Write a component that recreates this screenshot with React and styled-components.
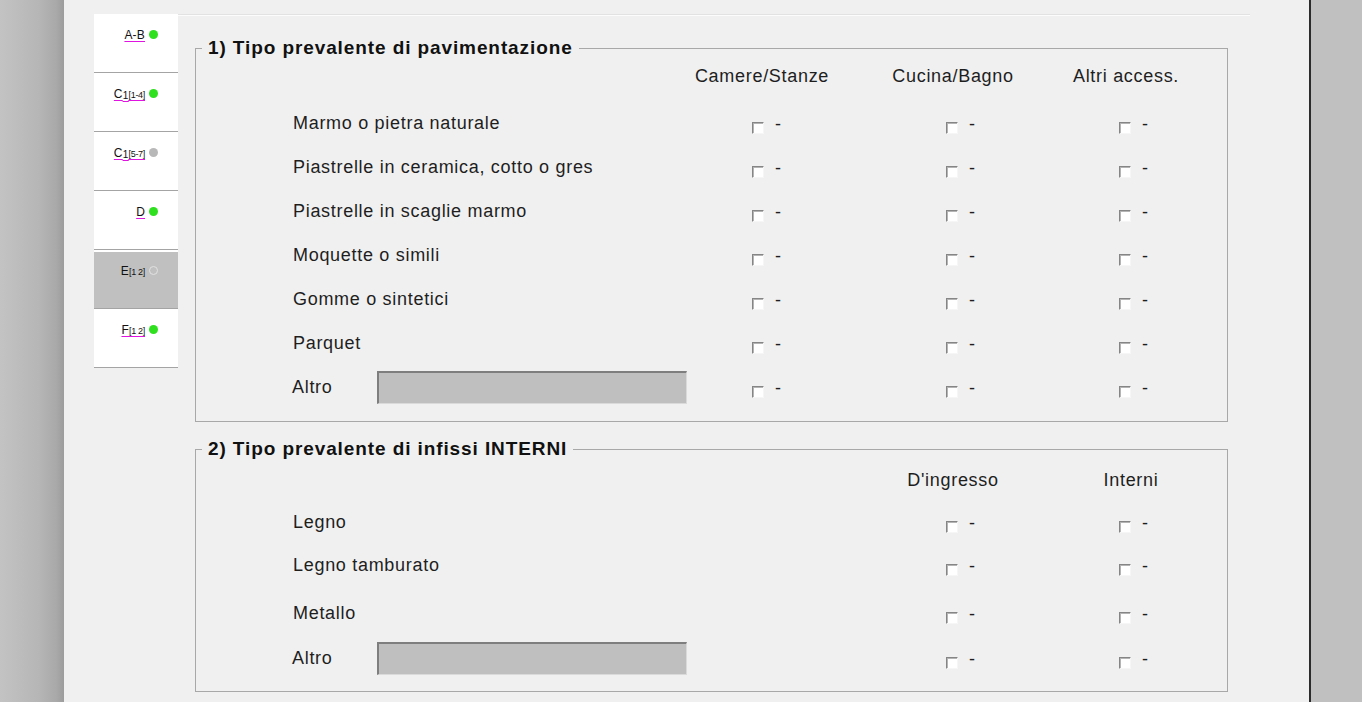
import React from "react";
import styled, { createGlobalStyle } from "styled-components";

const GlobalStyle = createGlobalStyle`
  html, body {
    margin: 0;
    padding: 0;
  }
  body {
    font-family: "Liberation Sans", Arial, sans-serif;
    overflow: hidden;
  }
`;

const Page = styled.div`
  display: flex;
  width: 1362px;
  height: 702px;
  overflow: hidden;
`;

const LeftShade = styled.div`
  width: 64px;
  flex-shrink: 0;
  background: linear-gradient(
    to right,
    #c3c3c3 0%,
    #b6b6b6 60%,
    #a9a9a9 88%,
    #9c9c9c 100%
  );
`;

const Panel = styled.div`
  width: 1247px;
  flex-shrink: 0;
  box-sizing: border-box;
  display: flex;
  align-items: flex-start;
  padding-left: 30px;
  background: #f0f0f0;
  border-right: 2px solid #2b2b2b;
`;

const RightShade = styled.div`
  flex: 1;
  background: #c0c0c0;
`;

const TabColumn = styled.div`
  width: 84px;
  flex-shrink: 0;
  margin-top: 14px;
  display: flex;
  flex-direction: column;
`;

const Tab = styled.div`
  height: 59px;
  box-sizing: border-box;
  display: flex;
  justify-content: flex-end;
  align-items: flex-start;
  padding: 14px 20px 0 0;
  background: ${(p) => (p.$active ? "#c0c0c0" : "#ffffff")};
  box-shadow: ${(p) => (p.$active ? "inset 0 2px 0 #ffffff" : "none")};
  border-bottom: 1px solid #a4a4a4;
`;

const TabLabel = styled.span`
  display: inline-flex;
  align-items: baseline;
  font-size: 12px;
  line-height: 14px;
  height: 14px;
  color: #111;
  letter-spacing: 0.2px;
  text-decoration: ${(p) => (p.$link ? "underline" : "none")};
  text-decoration-color: #e014e0;
  text-underline-offset: 2px;
`;

const Index = styled.span`
  font-size: 10px;
  position: relative;
  top: 1px;
  text-decoration: inherit;
`;

const Range = styled.span`
  font-size: 9px;
  letter-spacing: -0.3px;
  text-decoration: inherit;
`;

const Dot = styled.span`
  width: 9px;
  height: 9px;
  box-sizing: border-box;
  border-radius: 50%;
  margin: 2px 0 0 4px;
  flex-shrink: 0;
  background: ${(p) =>
    p.$state === "on" ? "#2fe01f" : p.$state === "off" ? "#b8b8b8" : "transparent"};
  border: ${(p) => (p.$state === "empty" ? "1.5px solid #e2e2e2" : "none")};
`;

const Content = styled.div`
  width: 1072px;
  display: flex;
  flex-direction: column;
`;

const TopRule = styled.div`
  margin-top: 14px;
  height: 0;
  border-top: 1px solid #e2e2e2;
  border-bottom: 1px solid #fcfcfc;
`;

const Group = styled.fieldset`
  margin: ${(p) => p.$top}px 0 0 17px;
  width: 1033px;
  box-sizing: border-box;
  min-width: 0;
  padding: 0 0 ${(p) => p.$bottom}px 0;
  border: 1px solid #a8a8a8;
`;

const Legend = styled.legend`
  margin-left: 6px;
  padding: 0 6px;
  font-size: 19px;
  line-height: 20px;
  font-weight: bold;
  letter-spacing: 0.9px;
  color: #111;
`;

const Row = styled.div`
  display: grid;
  grid-template-columns: ${(p) => p.$cols};
  align-items: center;
  height: ${(p) => p.$h}px;
  margin-bottom: ${(p) => p.$gap || 0}px;
  font-size: 18px;
  line-height: 20px;
  letter-spacing: 0.7px;
  color: #1e1e1e;
`;

const HeadCell = styled.div`
  width: ${(p) => p.$w}px;
  display: flex;
  justify-content: center;
  white-space: nowrap;
`;

const Label = styled.div`
  padding-left: 97px;
  white-space: nowrap;
`;

const OtherCell = styled.div`
  display: flex;
  align-items: center;
  padding-left: 96px;
`;

const OtherLabel = styled.span`
  width: 85px;
`;

const OtherInput = styled.div`
  width: 310px;
  height: 33px;
  box-sizing: border-box;
  background: #bfbfbf;
  border-top: 2px solid #7e7e7e;
  border-left: 2px solid #7e7e7e;
  border-right: 1px solid #dadada;
  border-bottom: 1px solid #dadada;
`;

const CheckCell = styled.div`
  display: flex;
  align-items: center;
  padding-left: 52px;
`;

const Box = styled.span`
  width: 12px;
  height: 12px;
  box-sizing: border-box;
  margin-top: 9px;
  background: #ffffff;
  border-top: 1px solid #858585;
  border-left: 1px solid #858585;
  border-right: 1px solid #f6f6f6;
  border-bottom: 1px solid #f6f6f6;
  box-shadow: inset 1px 1px 0 #b4b4b4;
`;

const Dash = styled.span`
  margin-left: 11px;
  position: relative;
  top: 1px;
`;

const tabs = [
  { main: "A-B", state: "on", link: true },
  { main: "C", idx: "1", range: "[1-4]", state: "on", link: true },
  { main: "C", idx: "1", range: "[5-7]", state: "off", link: true },
  { main: "D", state: "on", link: true },
  { main: "E", range: "[1 2]", state: "empty", active: true },
  { main: "F", range: "[1 2]", state: "on", link: true },
];

const floors = [
  "Marmo o pietra naturale",
  "Piastrelle in ceramica, cotto o gres",
  "Piastrelle in scaglie marmo",
  "Moquette o simili",
  "Gomme o sintetici",
  "Parquet",
];

const doors = [
  { name: "Legno", h: 42 },
  { name: "Legno tamburato", h: 44 },
  { name: "Metallo", h: 52 },
];

const FLOOR_COLS = "504px 194px 173px 1fr";
const DOOR_COLS = "698px 173px 1fr";

function Check() {
  return (
    <CheckCell>
      <Box />
      <Dash>-</Dash>
    </CheckCell>
  );
}

export default function App() {
  return (
    <>
      <GlobalStyle />
      <Page>
        <LeftShade />
        <Panel>
          <TabColumn>
            {tabs.map((t, i) => (
              <Tab key={i} $active={t.active}>
                <TabLabel $link={t.link}>
                  {t.main}
                  {t.idx && <Index>{t.idx}</Index>}
                  {t.range && <Range>{t.range}</Range>}
                </TabLabel>
                <Dot $state={t.state} />
              </Tab>
            ))}
          </TabColumn>

          <Content>
            <TopRule />

            <Group $top={22} $bottom={12}>
              <Legend>1) Tipo prevalente di pavimentazione</Legend>
              <Row $cols={FLOOR_COLS} $h={36} $gap={7}>
                <div />
                <HeadCell $w={124}>Camere/Stanze</HeadCell>
                <HeadCell $w={118}>Cucina/Bagno</HeadCell>
                <HeadCell $w={118}>Altri access.</HeadCell>
              </Row>
              {floors.map((f) => (
                <Row key={f} $cols={FLOOR_COLS} $h={44}>
                  <Label>{f}</Label>
                  <Check />
                  <Check />
                  <Check />
                </Row>
              ))}
              <Row $cols={FLOOR_COLS} $h={44}>
                <OtherCell>
                  <OtherLabel>Altro</OtherLabel>
                  <OtherInput />
                </OtherCell>
                <Check />
                <Check />
                <Check />
              </Row>
            </Group>

            <Group $top={17} $bottom={14}>
              <Legend>2) Tipo prevalente di infissi INTERNI</Legend>
              <Row $cols={DOOR_COLS} $h={42}>
                <div />
                <HeadCell $w={118}>D'ingresso</HeadCell>
                <HeadCell $w={128}>Interni</HeadCell>
              </Row>
              {doors.map((d) => (
                <Row key={d.name} $cols={DOOR_COLS} $h={d.h}>
                  <Label>{d.name}</Label>
                  <Check />
                  <Check />
                </Row>
              ))}
              <Row $cols={DOOR_COLS} $h={38}>
                <OtherCell>
                  <OtherLabel>Altro</OtherLabel>
                  <OtherInput />
                </OtherCell>
                <Check />
                <Check />
              </Row>
            </Group>
          </Content>
        </Panel>
        <RightShade />
      </Page>
    </>
  );
}
